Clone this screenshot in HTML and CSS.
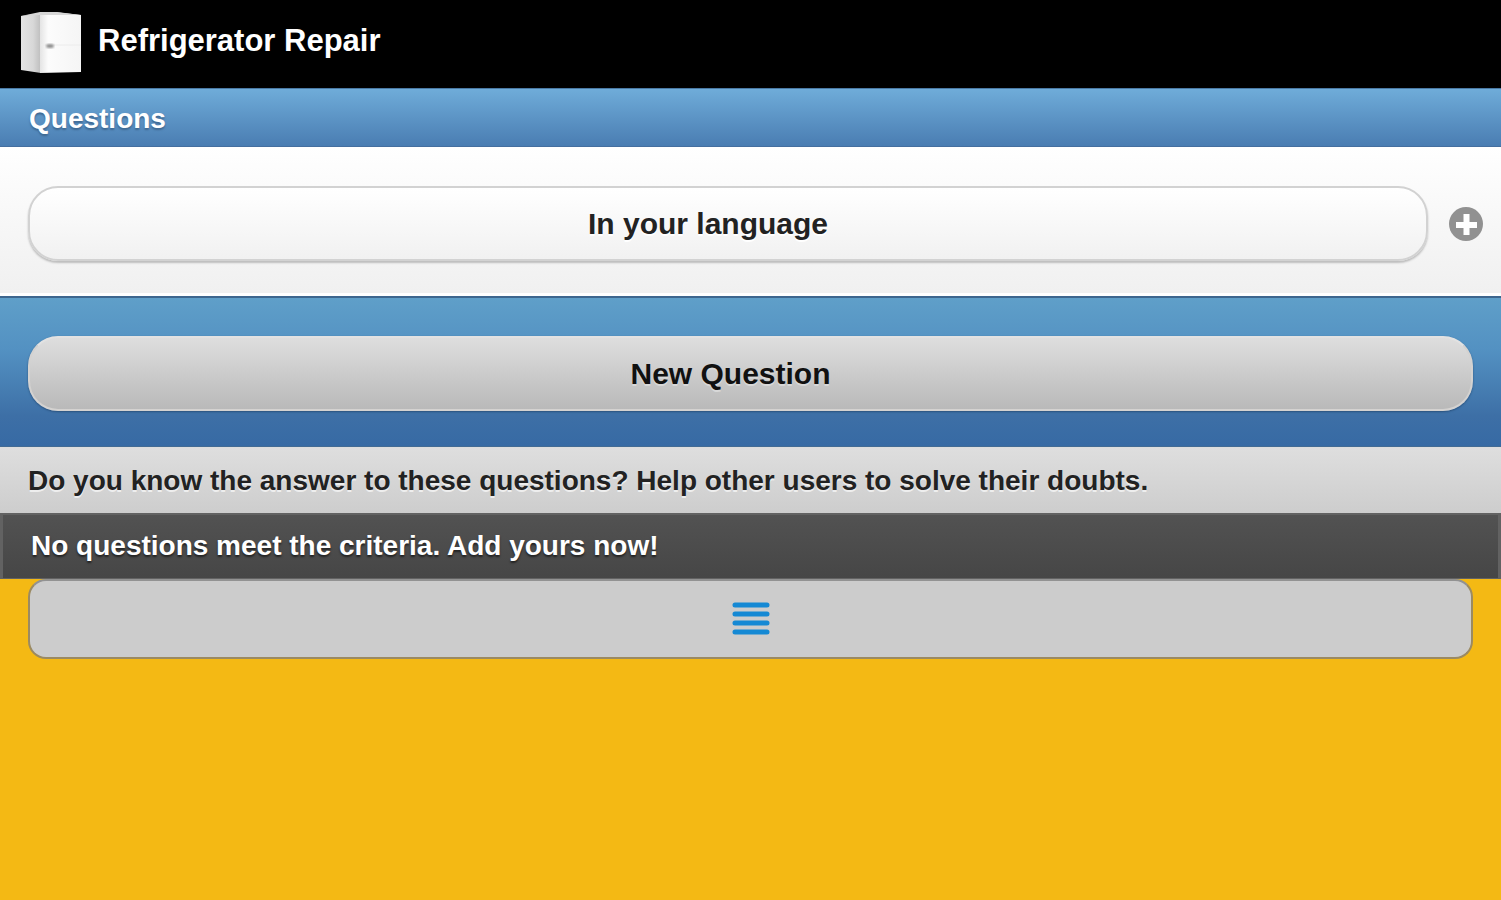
FILE: index.html
```html
<!DOCTYPE html>
<html lang="en">
<head>
<meta charset="utf-8">
<meta name="viewport" content="width=device-width, initial-scale=1">
<title>Refrigerator Repair</title>
<link rel="stylesheet" href="styles.css">
</head>
<body>
<header class="site-header">
  <svg class="logo" viewBox="0 0 62 62" aria-hidden="true">
    <defs>
      <linearGradient id="side" x1="0" x2="1"><stop offset="0" stop-color="#e4e4e4"/><stop offset=".6" stop-color="#d8d8d8"/><stop offset="1" stop-color="#bdbdbd"/></linearGradient>
      <linearGradient id="door" x1="0" x2="1"><stop offset="0" stop-color="#e4e4e4"/><stop offset=".2" stop-color="#fcfcfc"/><stop offset="1" stop-color="#f5f5f5"/></linearGradient>
      <filter id="soft"><feGaussianBlur stdDeviation="1"/></filter>
    </defs>
    <path d="M1 4 21 1 21 61 1 58Z" fill="url(#side)"/>
    <path d="M20 1 34 0 61 3 61 60 20 61Z" fill="url(#door)"/>
    <path d="M1 4 20 0 37 0 61 3 20 3Z" fill="#d6d6d6"/>
    <path d="M21 33H61" stroke="#ececec"/>
    <ellipse cx="30" cy="34" rx="4" ry="2" fill="#8c8c8c" filter="url(#soft)"/>
  </svg>
  <h1 class="site-title">Refrigerator Repair</h1>
</header>
<main>
  <h2 class="section-title">Questions</h2>
  <div class="language-row">
    <button class="pill pill-light" type="button">In your language</button>
    <button class="add" type="button" aria-label="Add language">
      <svg viewBox="0 0 34 34" aria-hidden="true"><circle cx="17" cy="17" r="17" fill="#919191"/><path d="M17.500 7V28M7 18H28" stroke="#fff" stroke-width="6"/></svg>
    </button>
  </div>
  <div class="question-row">
    <button class="pill pill-grey" type="button">New Question</button>
  </div>
  <p class="notice notice-light">Do you know the answer to these questions? Help other users to solve their doubts.</p>
  <p class="notice notice-dark">No questions meet the criteria. Add yours now!</p>
  <div class="menu-row">
    <button class="menu" type="button" aria-label="Menu">
      <svg viewBox="0 0 38 36" aria-hidden="true"><path d="M3 4H35M3 13H35M3 22H35M3 31H35" stroke="#1589d4" stroke-width="5" stroke-linecap="round"/></svg>
    </button>
  </div>
</main>
</body>
</html>
```
FILE: styles.css
```css
* { box-sizing: border-box; }
body {
  margin: 0;
  min-height: 100vh;
  background: #f4b914;
  font-family: "Liberation Sans", Arial, sans-serif;
  font-weight: bold;
}
h1, h2, p { margin: 0; }
button { font: inherit; cursor: pointer; }
svg { display: block; }
.site-header {
  display: flex;
  gap: 16px;
  padding: 12px 20px 14px;
  background: #000;
}
.logo { width: 62px; height: 62px; }
.site-title {
  padding-top: 11px;
  color: #fff;
  font-size: 31px;
  line-height: 36px;
}
.section-title {
  padding: 15px 29px 12px;
  border-top: 1px solid #4a7aa5;
  border-bottom: 1px solid #456f9f;
  background: linear-gradient(#6facd9, #4a7db2);
  color: #fff;
  font-size: 28px;
  line-height: 30px;
  text-shadow: 0 2px 2px #3e6790;
}
.language-row {
  display: flex;
  align-items: center;
  gap: 21px;
  padding: 39px 18px 32px 28px;
  border-bottom: 3px solid #fff;
  background: linear-gradient(#fff, #f0f0f0);
}
.pill {
  flex: 1;
  height: 75px;
  border-radius: 30px;
  font-size: 30px;
  line-height: 36px;
}
.pill-light {
  padding: 0 40px 0 0;
  border: 2px solid #d2d2d2;
  background: linear-gradient(#fff, #f1f1f1);
  box-shadow: 0 2px 2px #bdbdbd;
  color: #222;
  text-shadow: 0 2px 0 #fff;
}
.add {
  padding: 0;
  border: 0;
  background: none;
}
.add svg { width: 34px; height: 34px; }
.question-row {
  display: flex;
  padding: 38px 28px 35px;
  border-top: 2px solid #3d668e;
  border-bottom: 1px solid #426b94;
  background: linear-gradient(#5f9fc9, #5391c2 35%, #3d6fa6 80%, #376aa4);
}
.pill-grey {
  padding: 0 40px 0 0;
  border: 2px solid #d4d2d0;
  border-top-color: #e2e2e2;
  background: linear-gradient(#dedede, #b9b9b9);
  box-shadow: 0 1px 2px #29517c;
  color: #111;
  text-shadow: 0 2px 0 #d8d8d8;
}
.notice {
  font-size: 28px;
  line-height: 32px;
}
.notice-light {
  padding: 17px 28px 16px;
  border-top: 1px solid #ddd;
  background: linear-gradient(#dedede, #cdcdcd);
  color: #222;
  text-shadow: 0 2px 0 #eee;
}
.notice-dark {
  padding: 15px 28px 16px;
  border: 2px solid #626262;
  border-width: 2px 3px 1px;
  background: linear-gradient(#525252, #464646);
  color: #fff;
  text-shadow: 0 2px 2px #222;
}
.menu-row { padding: 0 28px; }
.menu {
  display: flex;
  align-items: center;
  justify-content: center;
  width: 100%;
  height: 80px;
  padding: 0;
  border: 2px solid #9b8a62;
  border-top-color: #929292;
  border-radius: 18px;
  background: #cccccc;
}
.menu svg { width: 38px; height: 36px; }
```
